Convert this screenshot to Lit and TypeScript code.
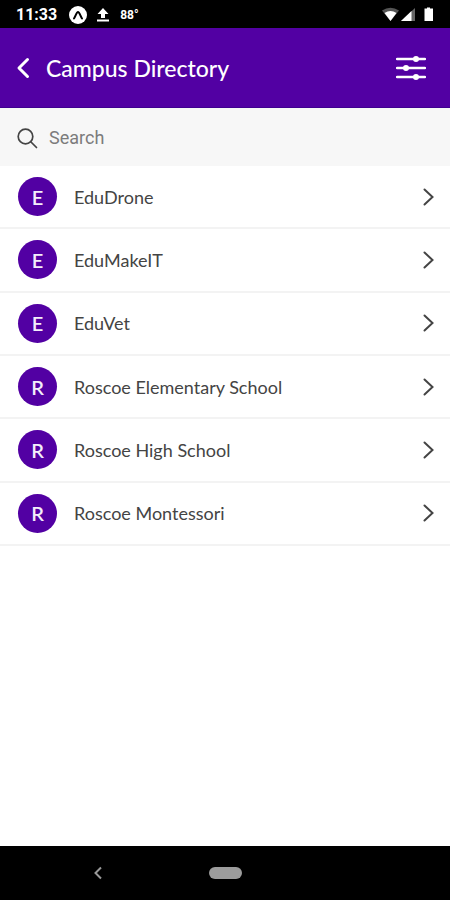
import { LitElement, html, css, svg } from "lit";
import { customElement, state } from "lit/decorators.js";

const campuses = [
  "EduDrone",
  "EduMakeIT",
  "EduVet",
  "Roscoe Elementary School",
  "Roscoe High School",
  "Roscoe Montessori",
];

@customElement("status-bar")
class StatusBar extends LitElement {
  static styles = css`
    :host {
      display: flex;
      align-items: center;
      height: 28px;
      padding: 2px 15px 0 16px;
      box-sizing: border-box;
      background: #000;
      color: #fff;
      font: 700 16px/20px Roboto, sans-serif;
    }
    svg { display: block; }
    .app { margin-left: 12px; }
    .upload { margin-left: 10px; }
    .temp { margin-left: 11px; font-size: 12px; flex: 1; }
    .system { display: flex; align-items: center; }
  `;

  render() {
    return html`
      <span>11:33</span>
      <svg class="app" width="18" height="18" viewBox="0 0 18 18" aria-hidden="true">
        <circle cx="9" cy="9" r="9" fill="#fff" />
        <path d="M5 12.500C6.500 10.500 7.500 6 9 6s2.500 4.500 4 6.500" fill="none" stroke="#000" stroke-width="2" stroke-linecap="round" />
      </svg>
      <svg class="upload" width="12" height="14" viewBox="0 0 12 14" aria-hidden="true">
        <path d="M6 0l5.500 6H8v4H4V6H.5zM0 11.500h12v2H0z" fill="#fff" />
      </svg>
      <span class="temp">88°</span>
      <svg class="system" width="54" height="16" viewBox="0 0 54 16" aria-hidden="true">
        <path d="M1 3.500Q9.500-2 18 3.500L9.500 14z" fill="#555" />
        <path d="M3.500 6Q9.500 2 15.500 6L9.500 14z" fill="#fff" />
        <path d="M34 1v13H20z" fill="#666" />
        <path d="M30.500 4v10H20z" fill="#fff" />
        <path d="M43.500 1.500h2.500V.5h3v1H52V14h-8.500z" fill="#fff" />
      </svg>
    `;
  }
}

@customElement("campus-row")
class CampusRow extends LitElement {
  static properties = { name: { type: String } };
  declare name: string;

  static styles = css`
    :host { display: grid; }
    .row {
      display: flex;
      align-items: center;
      gap: 17px;
      padding: 0 15px 0 18px;
      border: 0;
      border-bottom: 2px solid #f3f3f3;
      background: #fff;
      color: #444;
      text-align: left;
      font: 400 18px/24px Lato, sans-serif;
      cursor: pointer;
    }
    .avatar {
      display: grid;
      place-items: center;
      width: 39px;
      height: 39px;
      border-radius: 50%;
      background: #5200a3;
      color: #f4eefa;
      font-size: 20px;
      font-weight: 600;
    }
    .name { flex: 1; }
    svg { display: block; }
  `;

  render() {
    return html`
      <button class="row" type="button">
        <span class="avatar" aria-hidden="true">${this.name[0]}</span>
        <span class="name">${this.name}</span>
        <svg width="12" height="18" viewBox="0 0 12 18" fill="none" stroke="#444" stroke-width="2" aria-hidden="true">
          <path d="M1.500 1.500L9.500 9l-8 7.500" stroke-linecap="round" />
        </svg>
      </button>
    `;
  }
}

@customElement("app-root")
class AppRoot extends LitElement {
  @state() private query = "";

  static styles = css`
    :host {
      display: flex;
      flex-direction: column;
      min-height: 100vh;
      background: #fff;
      font-family: Lato, sans-serif;
    }
    button { border: 0; padding: 0; background: none; cursor: pointer; }
    svg { display: block; }
    header {
      display: flex;
      align-items: center;
      height: 80px;
      padding: 0 24px 0 16px;
      box-sizing: border-box;
      background: #5200a3;
      border-bottom: 1px solid #3f0090;
      color: #fff;
    }
    h1 {
      flex: 1;
      margin: 0 0 0 15px;
      font: 500 23px/28px Lato, sans-serif;
    }
    .search {
      display: flex;
      align-items: center;
      gap: 11px;
      height: 58px;
      padding: 2px 17px 0;
      box-sizing: border-box;
      background: #f7f7f7;
    }
    .search input {
      flex: 1;
      min-width: 0;
      padding: 0;
      border: 0;
      outline: 0;
      background: none;
      color: #222;
      font: 400 18px/24px Roboto, sans-serif;
    }
    .search input::placeholder { color: #7c7c7c; opacity: 1; }
    .list {
      display: grid;
      grid-auto-rows: 1fr;
      min-height: 380px;
      margin: 0;
      padding: 0;
      list-style: none;
    }
    li { display: grid; }
    nav {
      display: grid;
      grid-template-columns: 1fr auto 1fr;
      align-items: center;
      height: 54px;
      margin-top: auto;
      background: #000;
    }
    .back { justify-self: center; margin-right: 12px; }
    .home {
      width: 33px;
      height: 12px;
      border-radius: 6px;
      background: #9c9c9c;
    }
  `;

  private onInput(e: Event) {
    this.query = (e.target as HTMLInputElement).value;
  }

  render() {
    const q = this.query.toLowerCase();
    const shown = campuses.filter((c) => c.toLowerCase().includes(q));
    const slider = (y: number, x: number) => svg`
      <path d="M1 ${y}h28" stroke-width="2.500" stroke-linecap="round" />
      <circle cx=${x} cy=${y} r="3" fill="#fff" stroke="none" />`;
    return html`
      <status-bar></status-bar>
      <header>
        <button type="button" aria-label="Back">
          <svg width="15" height="22" viewBox="0 0 15 22" fill="none" stroke="#fff" stroke-width="3" stroke-linecap="round" stroke-linejoin="round">
            <path d="M11.500 2.500L3 11l8.500 8.500" />
          </svg>
        </button>
        <h1>Campus Directory</h1>
        <button type="button" aria-label="Filter">
          <svg width="30" height="26" viewBox="0 0 30 26" fill="none" stroke="#fff">
            ${slider(4, 20)}${slider(13, 10)}${slider(22, 20)}
          </svg>
        </button>
      </header>
      <label class="search">
        <svg width="21" height="21" viewBox="0 0 21 21" fill="none" stroke="#444" stroke-width="1.700" stroke-linecap="round" aria-hidden="true">
          <circle cx="8.500" cy="8.500" r="7.300" />
          <path d="M14 14l5.500 5.500" />
        </svg>
        <input type="text" placeholder="Search" aria-label="Search" @input=${this.onInput} />
      </label>
      <ul class="list">
        ${shown.map((c) => html`<li><campus-row .name=${c}></campus-row></li>`)}
      </ul>
      <nav aria-label="System">
        <button class="back" type="button" aria-label="Back">
          <svg width="10" height="14" viewBox="0 0 10 14" fill="none" stroke="#999" stroke-width="2">
            <path d="M8 1.500L2.500 7 8 12.500" />
          </svg>
        </button>
        <button class="home" type="button" aria-label="Home"></button>
      </nav>
    `;
  }
}
